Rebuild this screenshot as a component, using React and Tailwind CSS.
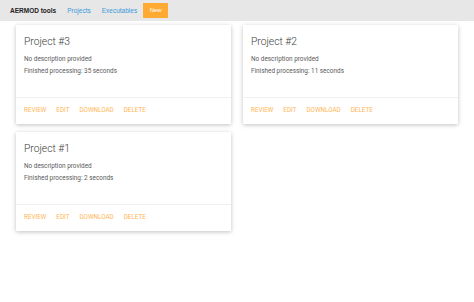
import React from 'react';

const projects = [
    { name: 'Project #3', time: '35 seconds' },
    { name: 'Project #2', time: '11 seconds' },
    { name: 'Project #1', time: '2 seconds' },
];

const ProjectCard = ({ project }) => (
    <div className="w-[215px] h-[99px] bg-white flex flex-col shadow-[0_1px_4px_rgba(0,0,0,0.25)] rounded-[1px]">
        <div className="flex-1 px-[8px] pt-[10px]">
            <div className="text-[10.3px] leading-[14px] font-light text-[#3a3a3a]">{project.name}</div>
            <div className="mt-[4px] text-[6.4px] leading-[12px] text-[#5a5a5a]">
                <p>No description provided</p>
                <p>Finished processing: {project.time}</p>
            </div>
        </div>
        <div className="h-[27px] border-t border-[#f0f0f0] flex items-center gap-[10px] px-[8px] text-[6.3px] text-[#ffb555] uppercase">
            <span>Review</span>
            <span>Edit</span>
            <span>Download</span>
            <span>Delete</span>
        </div>
    </div>
);

export default function App() {
    return (
        <div className="w-[474px] h-[302px] bg-white" style={{ fontFamily: 'Roboto, "Liberation Sans", sans-serif' }}>
            {/* Top nav */}
            <nav className="h-[21px] bg-[#e7e7e7] flex items-center pl-[10px]" style={{ fontFamily: '"Liberation Sans", Arial, sans-serif' }}>
                <span className="text-[6.5px] font-bold text-[#222]">AERMOD tools</span>
                <a className="ml-[11px] text-[6.5px] text-[#3b9ad9]">Projects</a>
                <a className="ml-[11px] text-[6.5px] text-[#3b9ad9]">Executables</a>
                <span className="ml-[6px] h-[15px] w-[25px] bg-[#ffaa33] text-white text-[6px] flex items-center justify-center">New</span>
            </nav>

            {/* Cards */}
            <div className="grid grid-cols-[215px_215px] gap-x-[12px] gap-y-[8px] pl-[16px] pt-[4px]">
                {projects.map((p) => (
                    <ProjectCard key={p.name} project={p} />
                ))}
            </div>
        </div>
    );
}
